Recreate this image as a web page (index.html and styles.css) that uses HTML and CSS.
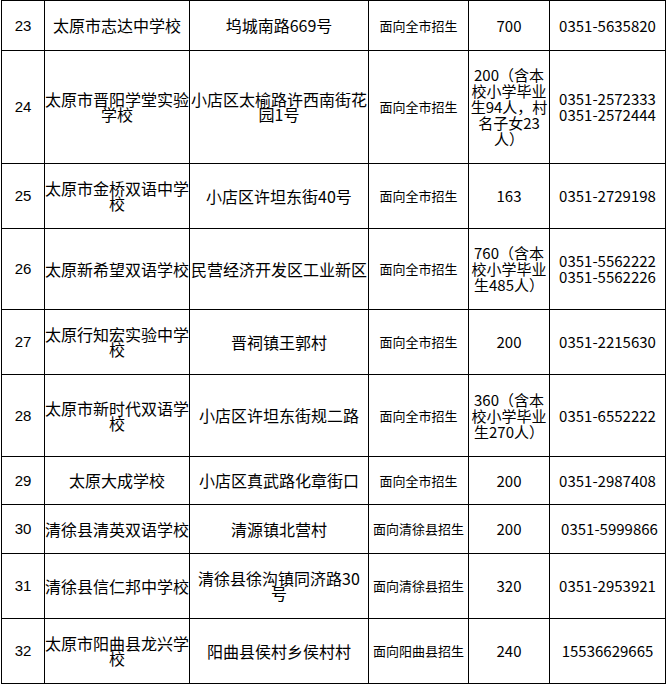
FILE: index.html
```html
<!DOCTYPE html>
<html lang="zh-CN">
<head>
<meta charset="utf-8">
<title>学校招生表</title>
<link rel="stylesheet" href="styles.css">
</head>
<body>
<table class="sheet">
  <colgroup>
    <col class="c-no">
    <col class="c-name">
    <col class="c-addr">
    <col class="c-scope">
    <col class="c-count">
    <col class="c-tel">
  </colgroup>
  <tbody>
    <tr class="h50">
      <td class="no">23</td><td class="name">太原市志达中学校</td><td class="addr">坞城南路669号</td><td class="scope">面向全市招生</td><td class="count">700</td><td class="tel">0351-5635820</td>
    </tr>
    <tr class="h113">
      <td class="no">24</td><td class="name">太原市晋阳学堂实验学校</td><td class="addr">小店区太榆路许西南街花园1号</td><td class="scope">面向全市招生</td><td class="count">200（含本校小学毕业生94人，村名子女23人）</td><td class="tel">0351-2572333 0351-2572444</td>
    </tr>
    <tr class="h65">
      <td class="no">25</td><td class="name">太原市金桥双语中学校</td><td class="addr">小店区许坦东街40号</td><td class="scope">面向全市招生</td><td class="count">163</td><td class="tel">0351-2729198</td>
    </tr>
    <tr class="h81">
      <td class="no">26</td><td class="name">太原新希望双语学校</td><td class="addr">民营经济开发区工业新区</td><td class="scope">面向全市招生</td><td class="count">760（含本校小学毕业生485人）</td><td class="tel">0351-5562222 0351-5562226</td>
    </tr>
    <tr class="h65">
      <td class="no">27</td><td class="name">太原行知宏实验中学校</td><td class="addr">晋祠镇王郭村</td><td class="scope">面向全市招生</td><td class="count">200</td><td class="tel">0351-2215630</td>
    </tr>
    <tr class="h82">
      <td class="no">28</td><td class="name">太原市新时代双语学校</td><td class="addr">小店区许坦东街规二路</td><td class="scope">面向全市招生</td><td class="count">360（含本校小学毕业生270人）</td><td class="tel">0351-6552222</td>
    </tr>
    <tr class="h48">
      <td class="no">29</td><td class="name">太原大成学校</td><td class="addr">小店区真武路化章街口</td><td class="scope">面向全市招生</td><td class="count">200</td><td class="tel">0351-2987408</td>
    </tr>
    <tr class="h49">
      <td class="no">30</td><td class="name">清徐县清英双语学校</td><td class="addr">清源镇北营村</td><td class="scope">面向清徐县招生</td><td class="count">200</td><td class="tel tel-shift">0351-5999866</td>
    </tr>
    <tr class="h65">
      <td class="no">31</td><td class="name">清徐县信仁邦中学校</td><td class="addr">清徐县徐沟镇同济路30号</td><td class="scope">面向清徐县招生</td><td class="count">320</td><td class="tel">0351-2953921</td>
    </tr>
    <tr class="h65">
      <td class="no">32</td><td class="name">太原市阳曲县龙兴学校</td><td class="addr">阳曲县侯村乡侯村村</td><td class="scope">面向阳曲县招生</td><td class="count">240</td><td class="tel">15536629665</td>
    </tr>
  </tbody>
</table>
</body>
</html>
```

FILE: styles.css
```css
html, body {
  margin: 0;
  padding: 0;
  background: #ffffff;
}

body {
  padding-left: 1px;
  font-family: "Noto Sans CJK SC", "Noto Sans", sans-serif;
  color: #000000;
}

.sheet {
  border-collapse: collapse;
  table-layout: fixed;
  width: 664px;
}

.c-no { width: 43px; }
.c-name { width: 145px; }
.c-addr { width: 179px; }
.c-scope { width: 100px; }
.c-count { width: 81px; }
.c-tel { width: 116px; }

.sheet td {
  border: 1px solid #000000;
  padding: 0;
  text-align: center;
  vertical-align: middle;
  font-size: 16px;
  line-height: 16px;
}

.h50 { height: 50px; }
.h113 { height: 113px; }
.h65 { height: 65px; }
.h81 { height: 81px; }
.h82 { height: 82px; }
.h48 { height: 48px; }
.h49 { height: 49px; }

.sheet td.no {
  font-family: "Liberation Sans", Arial, sans-serif;
  font-size: 15px;
}

.sheet td.name {
  font-size: 16px;
  line-height: 15px;
}

.sheet td.addr {
  padding: 0 1px;
  font-size: 16px;
  line-height: 15px;
}

.sheet td.scope {
  font-size: 13px;
}

.sheet td.count {
  font-size: 15px;
  line-height: 16px;
}

.sheet td.tel {
  padding: 0 4px;
  font-size: 15px;
  line-height: 16px;
}

.sheet td.tel-shift {
  padding: 0 4px 0 8px;
}
```
